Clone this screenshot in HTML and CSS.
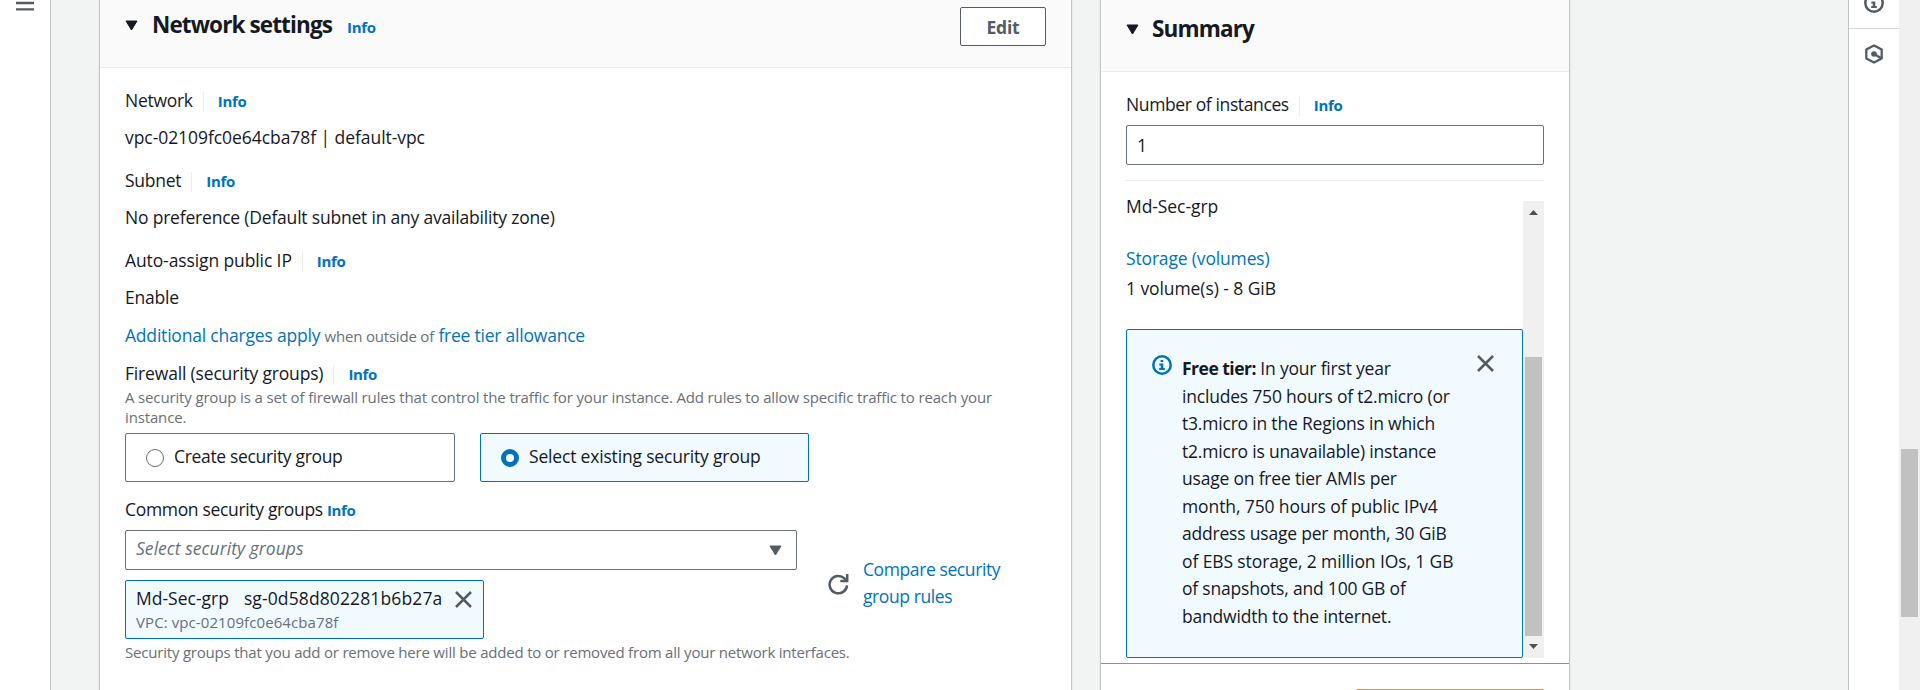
FILE: index.html
```
<!DOCTYPE html>
<html lang="en">
<head>
<meta charset="utf-8">
<title>Launch an instance</title>
<link rel="stylesheet" href="styles.css">
</head>
<body>
<div class="app">
  <nav class="side-nav">
    <svg class="burger" width="18" height="12" viewBox="0 0 18 12"><path d="M0 3h18M0 9.4h18" stroke="#545b64" stroke-width="2.4"/></svg>
  </nav>

  <main class="workspace">
    <section class="panel settings">
      <header class="panel-head">
        <svg class="caret" width="13" height="11" viewBox="0 0 13 11"><path d="M1 1h11L6.500 10z" fill="#16191f" stroke="#16191f" stroke-linejoin="round"/></svg>
        <h2>Network settings</h2>
        <a class="info">Info</a>
        <button class="edit">Edit</button>
      </header>
      <div class="panel-body">
        <div class="field">
          <div class="label-row"><span class="label tight">Network</span><a class="info">Info</a></div>
          <div class="value ids">vpc-02109fc0e64cba78f | default-vpc</div>
        </div>
        <div class="field">
          <div class="label-row"><span class="label tight">Subnet</span><a class="info">Info</a></div>
          <div class="value">No preference (Default subnet in any availability zone)</div>
        </div>
        <div class="field auto-ip">
          <div class="label-row"><span class="label snug">Auto-assign public IP</span><a class="info">Info</a></div>
          <div class="value">Enable</div>
        </div>
        <div class="charges"><a>Additional charges apply</a> <small>when outside of</small> <a class="allowance">free tier allowance</a></div>
        <div class="label-row"><span class="label firewall">Firewall (security groups)</span><a class="info">Info</a></div>
        <p class="hint desc">A security group is a set of firewall rules that control the traffic for your instance. Add rules to allow specific traffic to reach your<br>instance.</p>
        <div class="tiles">
          <div class="tile"><span class="radio"></span><span class="create">Create security group</span></div>
          <div class="tile selected"><span class="radio"></span><span class="existing">Select existing security group</span></div>
        </div>
        <div class="groups-label"><span class="common">Common security groups</span><a class="info">Info</a></div>
        <div class="groups">
          <div class="groups-main">
            <div class="select"><span>Select security groups</span>
              <svg width="13" height="11" viewBox="0 0 13 11"><path d="M1 1h11L6.500 10z" fill="#545b64" stroke="#545b64" stroke-linejoin="round"/></svg>
            </div>
            <div class="token">
              <div>
                <div class="token-title"><span class="sg-name">Md-Sec-grp</span><span class="sg-id">sg-0d58d802281b6b27a</span></div>
                <div class="token-sub">VPC: vpc-02109fc0e64cba78f</div>
              </div>
              <svg width="17" height="17" viewBox="0 0 17 17"><path d="M1 1l15 15M16 1L1 16" stroke="#545b64" stroke-width="2.500"/></svg>
            </div>
          </div>
          <svg class="refresh" width="21" height="21" viewBox="0 0 21 21" fill="none" stroke="#545b64" stroke-width="2.500"><path d="M19 11.300a8.700 8.700 0 1 1-2.600-6.900L18.600 6.600"/><path d="M19.200 0v6.900h-6.900"/></svg>
          <a class="compare">Compare security<br>group rules</a>
        </div>
        <p class="hint">Security groups that you add or remove here will be added to or removed from all your network interfaces.</p>
      </div>
    </section>

    <section class="panel summary">
      <header class="panel-head">
        <svg class="caret" width="13" height="11" viewBox="0 0 13 11"><path d="M1 1h11L6.500 10z" fill="#16191f" stroke="#16191f" stroke-linejoin="round"/></svg>
        <h2>Summary</h2>
      </header>
      <div class="panel-body">
        <div class="label-row"><span class="label count">Number of instances</span><a class="info">Info</a></div>
        <div class="number">1</div>
        <div class="scroll-box">
          <div class="scroll-content">
            <div class="sec-name">Md-Sec-grp</div>
            <a class="storage">Storage (volumes)</a>
            <div class="volumes">1 volume(s) - 8 GiB</div>
            <div class="alert">
              <svg class="alert-icon" width="20" height="20" viewBox="0 0 20 20"><circle cx="10" cy="10" r="8.700" fill="none" stroke="#0073bb" stroke-width="2.500"/><path d="M8.600 4.900h2.700v2.200H8.600zM7.300 8.500h4v4.400h1.500V15H7.200v-2.100h1.500v-2.300H7.300z" fill="#0073bb"/></svg>
              <p><b>Free tier:</b> In your first year<br>includes 750 hours of t2.micro (or<br>t3.micro in the Regions in which<br>t2.micro is unavailable) instance<br>usage on free tier AMIs per<br><span class="wide">month, 750 hours of public IPv4</span><br>address usage per month, 30 GiB<br><span class="wide">of EBS storage, 2 million IOs, 1 GB</span><br>of snapshots, and 100 GB of<br>bandwidth to the internet.</p>
              <svg class="alert-close" width="17" height="17" viewBox="0 0 17 17"><path d="M1 1l15 15M16 1L1 16" stroke="#545b64" stroke-width="2.500"/></svg>
            </div>
          </div>
          <div class="bar">
            <svg width="9" height="5" viewBox="0 0 9 5"><path d="M0 5L4.500 0L9 5z" fill="#505050"/></svg>
            <span class="thumb"></span>
            <svg width="9" height="5" viewBox="0 0 9 5"><path d="M0 0h9L4.500 5z" fill="#505050"/></svg>
          </div>
        </div>
      </div>
      <footer class="summary-foot"><span class="launch"></span></footer>
    </section>
  </main>

  <aside class="tools">
    <div class="tool first"><svg width="20" height="20" viewBox="0 0 20 20"><circle cx="10" cy="10" r="8.700" fill="none" stroke="#545b64" stroke-width="2.500"/><path d="M8.600 4.900h2.700v2.200H8.600zM7.300 8.500h4v4.400h1.500V15H7.200v-2.100h1.500v-2.300H7.300z" fill="#545b64"/></svg></div>
    <div class="tool"><svg width="20" height="20" viewBox="0 0 20 20"><path d="M10 1.400l7.700 4.200v8.800L10 18.600l-7.700-4.200V5.600z" fill="none" stroke="#545b64" stroke-width="2.300" stroke-linejoin="round"/><circle cx="10" cy="10" r="2.800" fill="#545b64"/><path d="M10 10l7.300 4.300" stroke="#545b64" stroke-width="2.300"/></svg></div>
  </aside>
  <div class="page-bar"><span class="page-thumb"></span></div>
</div>
</body>
</html>
```
FILE: styles.css
```
* { box-sizing: border-box; }
body {
  margin: 0;
  overflow: hidden;
  background: #f2f3f3;
  color: #16191f;
  font: 17.5px/28px "Open Sans", "Noto Sans", sans-serif;
  letter-spacing: -0.2px;
  white-space: nowrap;
}
h2, p { margin: 0; }
svg { display: block; flex: none; }
a { color: #0073bb; }
.app { display: flex; height: 690px; overflow: hidden; }

.side-nav { width: 51px; flex: none; background: #fff; border-right: 1px solid #bfc5c6; }
.burger { margin: 0 0 0 16px; }

.workspace { flex: 1; display: flex; gap: 28px; padding-left: 48px; }
.panel { background: #fff; border: solid #c2c7c8; border-width: 0 1px; box-shadow: 0 0 1px 1px #e9ebeb; }
.settings { width: 973px; }
.summary { width: 470px; display: flex; flex-direction: column; }
.panel-head { display: flex; background: #fafafa; border-bottom: 1px solid #eaeded; }
.settings .panel-head { height: 68px; padding: 7px 25px 0; }
.summary .panel-head { height: 72px; flex: none; padding: 11px 25px 0; }
.caret { margin: 13px 14px 0 0; }
.summary .caret { margin-right: 13px; }
h2 { padding-top: 1px; font-size: 22.5px; line-height: 34px; font-weight: 700; font-stretch: 95%; letter-spacing: -0.88px; }
.summary h2 { letter-spacing: -0.85px; }
.info { padding-top: 1px; font-size: 15px; font-weight: 700; font-stretch: 96%; letter-spacing: -0.3px; }
.panel-head .info { margin-left: 15px; padding: 0; line-height: 41px; }
.edit {
  width: 86px; height: 39px; margin-left: auto; padding: 0;
  border: 1px solid #545b64; border-radius: 2px; background: #fff; color: #545b64;
  font: 700 17.5px/36px "Open Sans", "Noto Sans", sans-serif; font-stretch: 96%;
  letter-spacing: -0.2px;
}

.settings .panel-body { padding: 18px 25px 0; }
.field { margin-bottom: 15px; }
.auto-ip { margin-bottom: 10px; }
.label-row { display: flex; align-items: center; height: 28px; }
.label { position: relative; margin-right: 25px; }
.label::after { content: ""; position: absolute; right: -11px; top: 6px; width: 1px; height: 20px; background: #eaeded; }
.value { margin-top: 9px; }
.tight { letter-spacing: -0.27px; }
.count { letter-spacing: -0.38px; }
.snug { letter-spacing: -0.11px; }
.ids { letter-spacing: -0.06px; }
.firewall { letter-spacing: -0.17px; }
.charges { margin-bottom: 9px; letter-spacing: -0.2px; }
.charges small { font-size: 15px; color: #687078; }
.allowance { letter-spacing: -0.22px; }
.hint { font-size: 15px; line-height: 20px; color: #687078; }
.desc { letter-spacing: -0.148px; }
.tiles { display: flex; gap: 25px; margin-top: 6px; }
.tile { display: flex; width: 330px; height: 49px; padding: 8px 20px; border: 1px solid #687078; border-radius: 2px; }
.tile.selected { width: 329px; border-color: #0073bb; background: #f1faff; }
.radio { width: 18px; height: 18px; margin: 7px 10px 0 0; border: 1px solid #687078; border-radius: 50%; background: #fff; }
.selected .radio { border: 5.5px solid #0073bb; }
.create { letter-spacing: -0.33px; }
.existing { letter-spacing: -0.18px; }
.common { letter-spacing: -0.33px; }
.groups-label { display: flex; gap: 4px; height: 28px; margin-top: 13px; }
.groups { display: flex; margin-top: 7px; }
.groups-main { width: 672px; }
.select {
  display: flex; justify-content: space-between; height: 40px; padding: 3px 14px 0 10px;
  border: 1px solid #687078; border-radius: 2px;
}
.select span { font-style: italic; color: #687078; letter-spacing: 0.05px; }
.select svg { margin-top: 11px; }
.token {
  display: flex; justify-content: space-between; width: 359px; height: 59px; margin-top: 10px; padding: 3px 11px 0 10px;
  border: 1px solid #0073bb; border-radius: 2px; background: #f1faff;
}
.token svg { margin-top: 7px; }
.token-title { display: flex; gap: 15px; }
.sg-name { letter-spacing: 0; }
.sg-id { letter-spacing: 0.12px; }
.token-sub { font-size: 15px; line-height: 20px; color: #687078; letter-spacing: 0.09px; }
.refresh { margin: 44px 0 0 31px; }
.compare { margin: 26px 0 0 14px; line-height: 27px; letter-spacing: -0.4px; }
.groups + .hint { margin-top: 3px; letter-spacing: -0.2px; }

.summary .panel-body { flex: none; height: 591px; padding: 18px 25px 0; }
.number { height: 40px; margin-top: 7px; padding: 5px 10px; border: 1px solid #687078; border-radius: 2px; }
.scroll-box { display: flex; margin-top: 15px; padding-top: 20px; border-top: 1px solid #eaeded; }
.scroll-content { width: 397px; height: 457px; }
.sec-name { margin-top: -9px; letter-spacing: -0.08px; }
.storage { display: block; margin-top: 24px; letter-spacing: -0.16px; }
.volumes { margin-top: 2px; letter-spacing: -0.08px; }
.alert {
  display: flex; height: 329px; margin-top: 27px; padding: 25px 28px 0 25px;
  border: 1px solid #0073bb; border-radius: 2px; background: #f1faff;
}
.alert p { flex: 1; margin-left: 10px; line-height: 27.5px; letter-spacing: -0.2px; }
.alert b { font-stretch: 96%; letter-spacing: -0.5px; }
.wide { letter-spacing: -0.11px; }
.bar { display: flex; flex-direction: column; align-items: center; justify-content: space-between; width: 21px; height: 457px; padding: 9px 0; background: #f0f0f0; }
.thumb { flex: none; width: 17px; height: 279px; margin: 142px 0 8px; background: #c1c1c1; }
.summary-foot { flex: 1; display: flex; padding: 25px 25px 0; border-top: 1px solid #879596; }
.launch { width: 188px; height: 40px; flex: none; margin-left: auto; border-radius: 2px; background: #ec9a1a; }

.tools { width: 51px; flex: none; background: #fff; border-left: 1px solid #bfc5c6; }
.tool { display: flex; justify-content: center; padding-top: 15px; }
.tool.first { height: 29px; padding: 0; border-bottom: 1px solid #d5dbdb; }
.first svg { margin-top: -7px; }
.page-bar { width: 21px; flex: none; padding: 449px 2px 0; background: #f0f0f0; }
.page-thumb { display: block; height: 168px; background: #c1c1c1; }
```
